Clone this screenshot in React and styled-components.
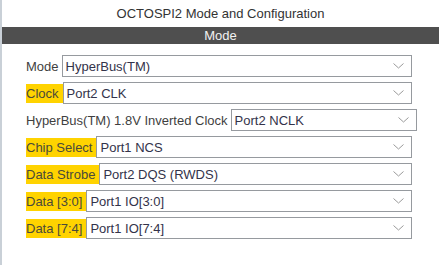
import styled, { createGlobalStyle } from "styled-components";

const GlobalStyle = createGlobalStyle`
  * {
    margin: 0;
    padding: 0;
    box-sizing: border-box;
  }

  html, body {
    width: 100%;
    height: 100%;
    overflow: hidden;
    background: #fff;
    font-family: "Liberation Sans", Arial, sans-serif;
  }
`;

const Page = styled.div`
  width: 439px;
  height: 265px;
  border-left: 2px solid #c9d0d7;
  background: #fff;
`;

const Title = styled.div`
  height: 27px;
  line-height: 28px;
  text-align: center;
  font-size: 13px;
  color: #333;
`;

const SectionBar = styled.div`
  height: 17px;
  line-height: 17px;
  background: #4f4f4f;
  color: #f2f2f2;
  text-align: center;
  font-size: 13px;
`;

const Form = styled.div`
  display: flex;
  flex-direction: column;
  gap: 5px;
  padding: 11px 0 0 24px;
`;

const Row = styled.div`
  display: flex;
  align-items: center;
  height: 22px;
  width: ${props => (props.wide ? "391px" : "386px")};
`;

const Label = styled.span`
  display: inline-block;
  height: 19px;
  line-height: 19px;
  padding-right: ${props => (props.required ? "4px" : "3px")};
  background: ${props => (props.required ? "#ffd300" : "transparent")};
  color: ${props => (props.required ? "#4a4a3a" : "#3f3f3f")};
  font-size: 13px;
  white-space: nowrap;
`;

const Select = styled.div`
  flex: 1;
  height: 22px;
  display: flex;
  align-items: center;
  justify-content: space-between;
  padding: 0 7px 0 3px;
  border: 1px solid #969a9f;
  background: #fff;
  color: #33334a;
  font-size: 13px;
  white-space: nowrap;
`;

const Chevron = () => (
  <svg width="11" height="6" viewBox="0 0 11 6">
    <path d="M0.5 0.5 L5.5 5 L10.5 0.5" fill="none" stroke="#9a9a9a" strokeWidth="1" />
  </svg>
);

const fields = [
  { label: "Mode", value: "HyperBus(TM)" },
  { label: "Clock", value: "Port2 CLK", required: true },
  { label: "HyperBus(TM) 1.8V Inverted Clock", value: "Port2 NCLK", wide: true },
  { label: "Chip Select", value: "Port1 NCS", required: true },
  { label: "Data Strobe", value: "Port2 DQS (RWDS)", required: true },
  { label: "Data [3:0]", value: "Port1 IO[3:0]", required: true },
  { label: "Data [7:4]", value: "Port1 IO[7:4]", required: true },
];

export default function App() {
  return (
    <>
      <GlobalStyle />
      <Page>
        <Title>OCTOSPI2 Mode and Configuration</Title>
        <SectionBar>Mode</SectionBar>
        <Form>
          {fields.map((f) => (
            <Row key={f.label} wide={f.wide}>
              <Label required={f.required}>{f.label}</Label>
              <Select>
                <span>{f.value}</span>
                <Chevron />
              </Select>
            </Row>
          ))}
        </Form>
      </Page>
    </>
  );
}
